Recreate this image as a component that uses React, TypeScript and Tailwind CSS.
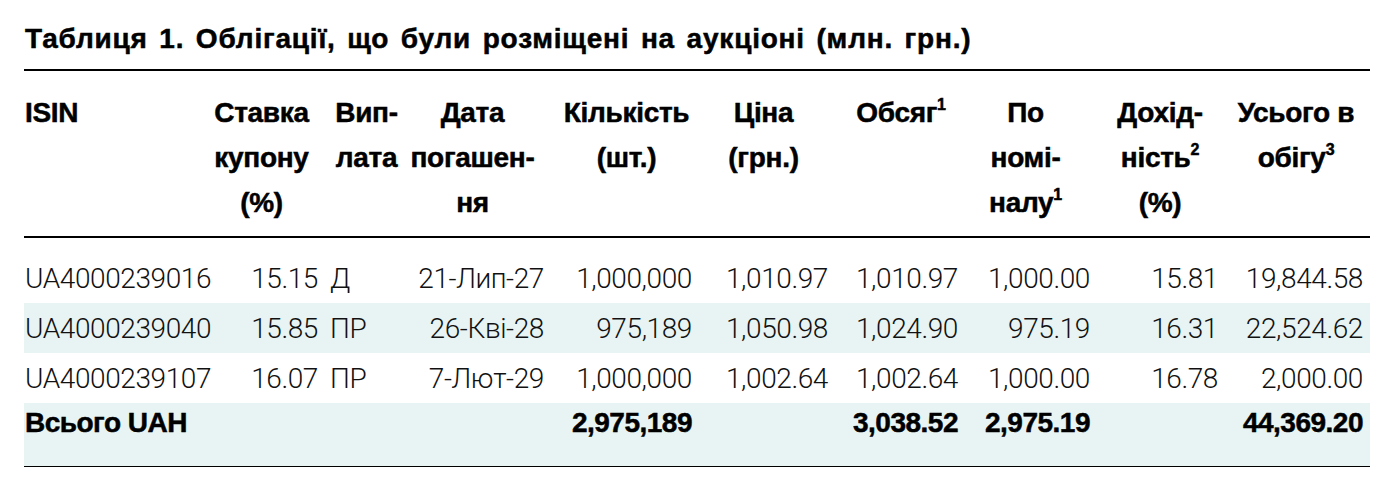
import React from "react";

const FONT = "font-['Liberation_Sans',Arial,sans-serif]";
const DATA_FONT = "font-['Roboto','Liberation_Sans',sans-serif] font-light";
const HEAVY = "[-webkit-text-stroke:0.5px_black]";

const Sup = ({ n }: { n: string }) => (
  <sup className="text-[16px] relative top-[-2px] align-[0.6em] leading-none">{n}</sup>
);

const gridCols =
  "grid grid-cols-[178px_119px_87px_149px_143px_135px_132px_131px_134px_138px]";

const headers: { cls: string; lines: React.ReactNode[] }[] = [
  { cls: "text-left pl-[1px]", lines: ["ISIN"] },
  { cls: "text-center", lines: ["Ставка", "купону", "(%)"] },
  { cls: "text-center pl-[4px]", lines: ["Вип-", "лата"] },
  { cls: "text-center pr-[20px]", lines: ["Дата", "погашен-", "ня"] },
  { cls: "text-center pr-[4px]", lines: ["Кількість", "(шт.)"] },
  { cls: "text-center pr-[8px]", lines: ["Ціна", "(грн.)"] },
  { cls: "text-center", lines: [<>Обсяг<Sup n="1" /></>] },
  { cls: "text-center pr-[14px]", lines: ["По", "номі-", <>налу<Sup n="1" /></>] },
  { cls: "text-center pr-[10px]", lines: ["Дохід-", <>ність<Sup n="2" /></>, "(%)"] },
  { cls: "text-center pr-[10px]", lines: ["Усього в", <>обігу<Sup n="3" /></>] },
];

const cellCls = [
  "text-left pl-[1px]",
  "text-right pr-[3px]",
  "text-left pl-[9px]",
  "text-right pr-[13px]",
  "text-right pr-[8px]",
  "text-right pr-[7px]",
  "text-right pr-[9px]",
  "text-right pr-[8px]",
  "text-right pr-[14px]",
  "text-right pr-[7px]",
];

const rows: string[][] = [
  ["UA4000239016", "15.15", "Д", "21-Лип-27", "1,000,000", "1,010.97", "1,010.97", "1,000.00", "15.81", "19,844.58"],
  ["UA4000239040", "15.85", "ПР", "26-Кві-28", "975,189", "1,050.98", "1,024.90", "975.19", "16.31", "22,524.62"],
  ["UA4000239107", "16.07", "ПР", "7-Лют-29", "1,000,000", "1,002.64", "1,002.64", "1,000.00", "16.78", "2,000.00"],
];

const total: string[] = ["Всього UAH", "", "", "", "2,975,189", "", "3,038.52", "2,975.19", "", "44,369.20"];

export default function App() {
  return (
    <div className={`w-[1397px] h-[493px] bg-white text-black ${FONT} pl-[24px]`}>
      <div className="w-[1346px]">
        <div className={`pt-[21px] pl-[1px] text-[28px] leading-[36px] font-bold tracking-[0.8px] [word-spacing:3px] whitespace-nowrap ${HEAVY}`}>
          Таблиця 1. Облігації, що були розміщені на аукціоні (млн. грн.)
        </div>
        <div className="mt-[12px] border-t-2 border-black" />
        <div className={`${gridCols} pt-[19px] pb-[11px] text-[28px] leading-[45px] font-bold tracking-[-0.3px] whitespace-nowrap ${HEAVY}`}>
          {headers.map((h, i) => (
            <div key={i} className={h.cls}>
              {h.lines.map((l, j) => (
                <div key={j}>{l}</div>
              ))}
            </div>
          ))}
        </div>
        <div className="border-t-2 border-black" />
        <div className="pt-[15px] text-[28px] whitespace-nowrap">
          {rows.map((r, ri) => (
            <div
              key={ri}
              className={`${gridCols} h-[50px] pt-[2px] leading-[48px] ${DATA_FONT} tracking-[-0.4px] text-[#111] ${ri === 1 ? "bg-[#e8f4f4]" : ""}`}
            >
              {r.map((c, ci) => (
                <div key={ci} className={cellCls[ci]}>
                  {c}
                </div>
              ))}
            </div>
          ))}
          <div className={`${gridCols} h-[63px] leading-[40px] bg-[#e8f4f4] font-bold text-black tracking-[-0.5px] ${HEAVY}`}>
            {total.map((c, ci) => (
              <div key={ci} className={cellCls[ci]}>
                {c}
              </div>
            ))}
          </div>
        </div>
        <div className="border-t border-black" />
      </div>
    </div>
  );
}
